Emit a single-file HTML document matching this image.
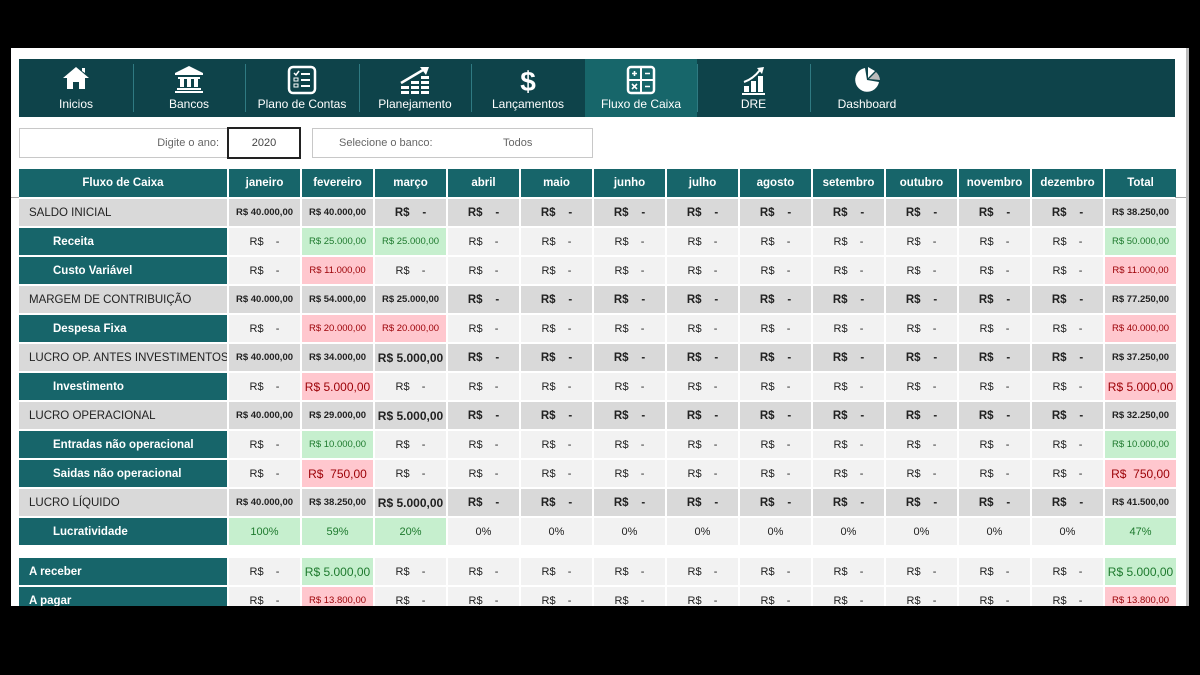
<!DOCTYPE html>
<html><head><meta charset="utf-8"><style>
*{margin:0;padding:0;box-sizing:border-box}
body{width:1200px;height:675px;background:#000;position:relative;overflow:hidden;font-family:"Liberation Sans",sans-serif}
#w{position:absolute;left:11px;top:48px;width:1178px;height:558px;background:#fff;overflow:hidden;border-right:3px solid #bbb}
#nav{position:absolute;left:8px;top:11px;width:1156px;height:58px;background:#0e434a}
.n{position:absolute;top:0;height:58px;color:#fff;font-size:12px;text-align:center}
.n span{position:absolute;left:0;right:0;top:38px}
.n svg{position:absolute;left:50%;top:6px;transform:translateX(-50%)}
.sep{position:absolute;top:5px;width:1px;height:48px;background:#2f7a82}
.box{position:absolute;border:1px solid #c8c8c8;height:30px;font-size:11px;color:#666;background:#fff}
table{position:absolute;left:6px;top:119px;border-collapse:separate;border-spacing:2px;table-layout:fixed}
td{height:27px;width:71px;text-align:center;font-size:11px;color:#222;background:#f2f2f2;white-space:nowrap;padding:0;overflow:hidden}
tr.h td{height:28px;background:#17656a;color:#fff;font-weight:bold;font-size:11.5px}
td.l{width:208px;min-width:208px;max-width:208px;text-align:left;text-indent:10px;font-size:11.5px}
td.t{background:#17656a;color:#fff;font-weight:bold;text-indent:34px}
tr.a td.l{background:#17656a;color:#fff;font-weight:bold}
tr.g td{background:#d9d9d9;font-weight:bold;font-size:9.5px}
tr.g td.l{font-weight:normal;font-size:11.5px}
tr.g td.d,td.d{font-size:11.5px}
td.gr{background:#c6efce!important;color:#1e7a2e;font-weight:normal!important}
td.rd{background:#ffc7ce!important;color:#9c0006;font-weight:normal!important}
td.sm{font-size:9.5px}
td.bg{font-size:12px!important}
tr.sp td{height:9px;background:#fff}
</style></head><body>
<div id="w">
<div id="nav">
<div class="n" style="left:0;width:114px"><svg width="30" height="26" viewBox="0 0 30 26"><path d="M15 2 L2 13 H6 V24 H12 V17 H18 V24 H24 V13 H28 Z M21 3 H24 V8 L21 6Z" fill="#fff"/></svg><span>Inicios</span></div>
<div class="sep" style="left:114px"></div>
<div class="n" style="left:114px;width:112px"><svg width="32" height="28" viewBox="0 0 32 28"><path d="M16 1 L2 8 V10 H30 V8 Z" fill="#fff"/><rect x="5" y="12" width="22" height="2" fill="#fff"/><rect x="7" y="14" width="4" height="8" fill="#fff"/><rect x="14" y="14" width="4" height="8" fill="#fff"/><rect x="21" y="14" width="4" height="8" fill="#fff"/><rect x="4" y="23" width="24" height="2" fill="#fff"/><rect x="2" y="26" width="28" height="2" fill="#fff"/></svg><span>Bancos</span></div>
<div class="sep" style="left:226px"></div>
<div class="n" style="left:226px;width:114px"><svg width="30" height="30" viewBox="0 0 30 30"><rect x="2" y="2" width="26" height="26" rx="4" fill="none" stroke="#fff" stroke-width="2.5"/><path d="M7 8 L9 10 L12 6" stroke="#fff" stroke-width="1.5" fill="none"/><rect x="7" y="13" width="4" height="3" fill="none" stroke="#fff"/><rect x="7" y="19" width="4" height="3" fill="none" stroke="#fff"/><path d="M14 9H23M14 15H23M14 21H23" stroke="#fff" stroke-width="2"/></svg><span>Plano de Contas</span></div>
<div class="sep" style="left:340px"></div>
<div class="n" style="left:340px;width:112px"><svg width="34" height="30" viewBox="0 0 34 30"><path d="M3 18 L25 5" stroke="#fff" stroke-width="2.5"/><path d="M22 2 L31 2 L28 10Z" fill="#fff"/><rect x="3" y="21" width="8" height="3" fill="#fff"/><rect x="3" y="26" width="8" height="3" fill="#fff"/><rect x="13" y="16" width="8" height="3" fill="#fff"/><rect x="13" y="21" width="8" height="3" fill="#fff"/><rect x="13" y="26" width="8" height="3" fill="#fff"/><rect x="23" y="11" width="8" height="3" fill="#fff"/><rect x="23" y="16" width="8" height="3" fill="#fff"/><rect x="23" y="21" width="8" height="3" fill="#fff"/><rect x="23" y="26" width="8" height="3" fill="#fff"/></svg><span>Planejamento</span></div>
<div class="sep" style="left:452px"></div>
<div class="n" style="left:452px;width:114px"><svg width="24" height="30" viewBox="0 0 24 30"><text x="12" y="26" text-anchor="middle" font-family="Liberation Sans" font-weight="bold" font-size="28" fill="#fff">$</text></svg><span>Lançamentos</span></div>
<div class="n" style="left:566px;width:112px;background:#17666a"><svg width="30" height="30" viewBox="0 0 30 30"><rect x="2" y="2" width="26" height="26" rx="3" fill="none" stroke="#fff" stroke-width="2.5"/><path d="M15 2V28M2 15H28" stroke="#fff" stroke-width="2"/><path d="M6 8.5H11M8.5 6V11M19 8.5H24M6 19L11 24M11 19L6 24M19 21.5H24" stroke="#fff" stroke-width="1.6"/></svg><span>Fluxo de Caixa</span></div>
<div class="sep" style="left:678px"></div>
<div class="n" style="left:678px;width:113px"><svg width="26" height="30" viewBox="0 0 26 30"><path d="M3 17 Q12 14 19 5" stroke="#fff" stroke-width="2" fill="none"/><path d="M16 3 L23 2 L21 9Z" fill="#fff"/><rect x="3" y="21" width="5" height="6" fill="#fff"/><rect x="10" y="16" width="5" height="11" fill="#fff"/><rect x="17" y="11" width="5" height="16" fill="#fff"/><rect x="1" y="28" width="23" height="2" fill="#fff"/></svg><span>DRE</span></div>
<div class="sep" style="left:791px"></div>
<div class="n" style="left:791px;width:114px"><svg width="30" height="30" viewBox="0 0 30 30"><path d="M13 3 A12 12 0 1 0 27 17 L15 15 Z" fill="#fff"/><path d="M16 2 L16 13 L23 6Z" fill="#fff"/><path d="M17 14 L24 7 A12 12 0 0 1 28 15Z" fill="#bbb"/></svg><span>Dashboard</span></div>
</div>
<div class="box" style="left:8px;top:80px;width:209px"><span style="position:absolute;right:8px;top:8px">Digite o ano:</span></div>
<div class="box" style="left:216px;top:79px;width:74px;height:32px;border:2px solid #222;color:#444;text-align:center;line-height:28px">2020</div>
<div class="box" style="left:301px;top:80px;width:281px"><span style="position:absolute;left:26px;top:8px">Selecione o banco:</span><span style="position:absolute;left:190px;top:8px">Todos</span></div>
<table>
<colgroup><col style="width:208px"><col span="13" style="width:71px"></colgroup>
<tr class="h"><td class="l" style="text-align:center;text-indent:0">Fluxo de Caixa</td><td>janeiro</td><td>fevereiro</td><td>março</td><td>abril</td><td>maio</td><td>junho</td><td>julho</td><td>agosto</td><td>setembro</td><td>outubro</td><td>novembro</td><td>dezembro</td><td>Total</td></tr>
<tr class="g"><td class="l">SALDO INICIAL</td><td>R$ 40.000,00</td><td>R$ 40.000,00</td><td class="d">R$&nbsp;&nbsp;&nbsp;&nbsp;-</td><td class="d">R$&nbsp;&nbsp;&nbsp;&nbsp;-</td><td class="d">R$&nbsp;&nbsp;&nbsp;&nbsp;-</td><td class="d">R$&nbsp;&nbsp;&nbsp;&nbsp;-</td><td class="d">R$&nbsp;&nbsp;&nbsp;&nbsp;-</td><td class="d">R$&nbsp;&nbsp;&nbsp;&nbsp;-</td><td class="d">R$&nbsp;&nbsp;&nbsp;&nbsp;-</td><td class="d">R$&nbsp;&nbsp;&nbsp;&nbsp;-</td><td class="d">R$&nbsp;&nbsp;&nbsp;&nbsp;-</td><td class="d">R$&nbsp;&nbsp;&nbsp;&nbsp;-</td><td>R$ 38.250,00</td></tr>
<tr><td class="l t">Receita</td><td>R$&nbsp;&nbsp;&nbsp;&nbsp;-</td><td class="gr sm">R$ 25.000,00</td><td class="gr sm">R$ 25.000,00</td><td>R$&nbsp;&nbsp;&nbsp;&nbsp;-</td><td>R$&nbsp;&nbsp;&nbsp;&nbsp;-</td><td>R$&nbsp;&nbsp;&nbsp;&nbsp;-</td><td>R$&nbsp;&nbsp;&nbsp;&nbsp;-</td><td>R$&nbsp;&nbsp;&nbsp;&nbsp;-</td><td>R$&nbsp;&nbsp;&nbsp;&nbsp;-</td><td>R$&nbsp;&nbsp;&nbsp;&nbsp;-</td><td>R$&nbsp;&nbsp;&nbsp;&nbsp;-</td><td>R$&nbsp;&nbsp;&nbsp;&nbsp;-</td><td class="gr sm">R$ 50.000,00</td></tr>
<tr><td class="l t">Custo Variável</td><td>R$&nbsp;&nbsp;&nbsp;&nbsp;-</td><td class="rd sm">R$ 11.000,00</td><td>R$&nbsp;&nbsp;&nbsp;&nbsp;-</td><td>R$&nbsp;&nbsp;&nbsp;&nbsp;-</td><td>R$&nbsp;&nbsp;&nbsp;&nbsp;-</td><td>R$&nbsp;&nbsp;&nbsp;&nbsp;-</td><td>R$&nbsp;&nbsp;&nbsp;&nbsp;-</td><td>R$&nbsp;&nbsp;&nbsp;&nbsp;-</td><td>R$&nbsp;&nbsp;&nbsp;&nbsp;-</td><td>R$&nbsp;&nbsp;&nbsp;&nbsp;-</td><td>R$&nbsp;&nbsp;&nbsp;&nbsp;-</td><td>R$&nbsp;&nbsp;&nbsp;&nbsp;-</td><td class="rd sm">R$ 11.000,00</td></tr>
<tr class="g"><td class="l">MARGEM DE CONTRIBUIÇÃO</td><td>R$ 40.000,00</td><td>R$ 54.000,00</td><td>R$ 25.000,00</td><td class="d">R$&nbsp;&nbsp;&nbsp;&nbsp;-</td><td class="d">R$&nbsp;&nbsp;&nbsp;&nbsp;-</td><td class="d">R$&nbsp;&nbsp;&nbsp;&nbsp;-</td><td class="d">R$&nbsp;&nbsp;&nbsp;&nbsp;-</td><td class="d">R$&nbsp;&nbsp;&nbsp;&nbsp;-</td><td class="d">R$&nbsp;&nbsp;&nbsp;&nbsp;-</td><td class="d">R$&nbsp;&nbsp;&nbsp;&nbsp;-</td><td class="d">R$&nbsp;&nbsp;&nbsp;&nbsp;-</td><td class="d">R$&nbsp;&nbsp;&nbsp;&nbsp;-</td><td>R$ 77.250,00</td></tr>
<tr><td class="l t">Despesa Fixa</td><td>R$&nbsp;&nbsp;&nbsp;&nbsp;-</td><td class="rd sm">R$ 20.000,00</td><td class="rd sm">R$ 20.000,00</td><td>R$&nbsp;&nbsp;&nbsp;&nbsp;-</td><td>R$&nbsp;&nbsp;&nbsp;&nbsp;-</td><td>R$&nbsp;&nbsp;&nbsp;&nbsp;-</td><td>R$&nbsp;&nbsp;&nbsp;&nbsp;-</td><td>R$&nbsp;&nbsp;&nbsp;&nbsp;-</td><td>R$&nbsp;&nbsp;&nbsp;&nbsp;-</td><td>R$&nbsp;&nbsp;&nbsp;&nbsp;-</td><td>R$&nbsp;&nbsp;&nbsp;&nbsp;-</td><td>R$&nbsp;&nbsp;&nbsp;&nbsp;-</td><td class="rd sm">R$ 40.000,00</td></tr>
<tr class="g"><td class="l">LUCRO OP. ANTES INVESTIMENTOS</td><td>R$ 40.000,00</td><td>R$ 34.000,00</td><td class="bg">R$ 5.000,00</td><td class="d">R$&nbsp;&nbsp;&nbsp;&nbsp;-</td><td class="d">R$&nbsp;&nbsp;&nbsp;&nbsp;-</td><td class="d">R$&nbsp;&nbsp;&nbsp;&nbsp;-</td><td class="d">R$&nbsp;&nbsp;&nbsp;&nbsp;-</td><td class="d">R$&nbsp;&nbsp;&nbsp;&nbsp;-</td><td class="d">R$&nbsp;&nbsp;&nbsp;&nbsp;-</td><td class="d">R$&nbsp;&nbsp;&nbsp;&nbsp;-</td><td class="d">R$&nbsp;&nbsp;&nbsp;&nbsp;-</td><td class="d">R$&nbsp;&nbsp;&nbsp;&nbsp;-</td><td>R$ 37.250,00</td></tr>
<tr><td class="l t">Investimento</td><td>R$&nbsp;&nbsp;&nbsp;&nbsp;-</td><td class="rd bg">R$ 5.000,00</td><td>R$&nbsp;&nbsp;&nbsp;&nbsp;-</td><td>R$&nbsp;&nbsp;&nbsp;&nbsp;-</td><td>R$&nbsp;&nbsp;&nbsp;&nbsp;-</td><td>R$&nbsp;&nbsp;&nbsp;&nbsp;-</td><td>R$&nbsp;&nbsp;&nbsp;&nbsp;-</td><td>R$&nbsp;&nbsp;&nbsp;&nbsp;-</td><td>R$&nbsp;&nbsp;&nbsp;&nbsp;-</td><td>R$&nbsp;&nbsp;&nbsp;&nbsp;-</td><td>R$&nbsp;&nbsp;&nbsp;&nbsp;-</td><td>R$&nbsp;&nbsp;&nbsp;&nbsp;-</td><td class="rd bg">R$ 5.000,00</td></tr>
<tr class="g"><td class="l">LUCRO OPERACIONAL</td><td>R$ 40.000,00</td><td>R$ 29.000,00</td><td class="bg">R$ 5.000,00</td><td class="d">R$&nbsp;&nbsp;&nbsp;&nbsp;-</td><td class="d">R$&nbsp;&nbsp;&nbsp;&nbsp;-</td><td class="d">R$&nbsp;&nbsp;&nbsp;&nbsp;-</td><td class="d">R$&nbsp;&nbsp;&nbsp;&nbsp;-</td><td class="d">R$&nbsp;&nbsp;&nbsp;&nbsp;-</td><td class="d">R$&nbsp;&nbsp;&nbsp;&nbsp;-</td><td class="d">R$&nbsp;&nbsp;&nbsp;&nbsp;-</td><td class="d">R$&nbsp;&nbsp;&nbsp;&nbsp;-</td><td class="d">R$&nbsp;&nbsp;&nbsp;&nbsp;-</td><td>R$ 32.250,00</td></tr>
<tr><td class="l t">Entradas não operacional</td><td>R$&nbsp;&nbsp;&nbsp;&nbsp;-</td><td class="gr sm">R$ 10.000,00</td><td>R$&nbsp;&nbsp;&nbsp;&nbsp;-</td><td>R$&nbsp;&nbsp;&nbsp;&nbsp;-</td><td>R$&nbsp;&nbsp;&nbsp;&nbsp;-</td><td>R$&nbsp;&nbsp;&nbsp;&nbsp;-</td><td>R$&nbsp;&nbsp;&nbsp;&nbsp;-</td><td>R$&nbsp;&nbsp;&nbsp;&nbsp;-</td><td>R$&nbsp;&nbsp;&nbsp;&nbsp;-</td><td>R$&nbsp;&nbsp;&nbsp;&nbsp;-</td><td>R$&nbsp;&nbsp;&nbsp;&nbsp;-</td><td>R$&nbsp;&nbsp;&nbsp;&nbsp;-</td><td class="gr sm">R$ 10.000,00</td></tr>
<tr><td class="l t">Saidas não operacional</td><td>R$&nbsp;&nbsp;&nbsp;&nbsp;-</td><td class="rd bg">R$&nbsp;&nbsp;750,00</td><td>R$&nbsp;&nbsp;&nbsp;&nbsp;-</td><td>R$&nbsp;&nbsp;&nbsp;&nbsp;-</td><td>R$&nbsp;&nbsp;&nbsp;&nbsp;-</td><td>R$&nbsp;&nbsp;&nbsp;&nbsp;-</td><td>R$&nbsp;&nbsp;&nbsp;&nbsp;-</td><td>R$&nbsp;&nbsp;&nbsp;&nbsp;-</td><td>R$&nbsp;&nbsp;&nbsp;&nbsp;-</td><td>R$&nbsp;&nbsp;&nbsp;&nbsp;-</td><td>R$&nbsp;&nbsp;&nbsp;&nbsp;-</td><td>R$&nbsp;&nbsp;&nbsp;&nbsp;-</td><td class="rd bg">R$&nbsp;&nbsp;750,00</td></tr>
<tr class="g"><td class="l">LUCRO LÍQUIDO</td><td>R$ 40.000,00</td><td>R$ 38.250,00</td><td class="bg">R$ 5.000,00</td><td class="d">R$&nbsp;&nbsp;&nbsp;&nbsp;-</td><td class="d">R$&nbsp;&nbsp;&nbsp;&nbsp;-</td><td class="d">R$&nbsp;&nbsp;&nbsp;&nbsp;-</td><td class="d">R$&nbsp;&nbsp;&nbsp;&nbsp;-</td><td class="d">R$&nbsp;&nbsp;&nbsp;&nbsp;-</td><td class="d">R$&nbsp;&nbsp;&nbsp;&nbsp;-</td><td class="d">R$&nbsp;&nbsp;&nbsp;&nbsp;-</td><td class="d">R$&nbsp;&nbsp;&nbsp;&nbsp;-</td><td class="d">R$&nbsp;&nbsp;&nbsp;&nbsp;-</td><td>R$ 41.500,00</td></tr>
<tr class="a"><td class="l t">Lucratividade</td><td class="gr">100%</td><td class="gr">59%</td><td class="gr">20%</td><td>0%</td><td>0%</td><td>0%</td><td>0%</td><td>0%</td><td>0%</td><td>0%</td><td>0%</td><td>0%</td><td class="gr">47%</td></tr>
<tr class="sp"><td colspan="14"></td></tr>
<tr class="a"><td class="l">A receber</td><td>R$&nbsp;&nbsp;&nbsp;&nbsp;-</td><td class="gr bg">R$ 5.000,00</td><td>R$&nbsp;&nbsp;&nbsp;&nbsp;-</td><td>R$&nbsp;&nbsp;&nbsp;&nbsp;-</td><td>R$&nbsp;&nbsp;&nbsp;&nbsp;-</td><td>R$&nbsp;&nbsp;&nbsp;&nbsp;-</td><td>R$&nbsp;&nbsp;&nbsp;&nbsp;-</td><td>R$&nbsp;&nbsp;&nbsp;&nbsp;-</td><td>R$&nbsp;&nbsp;&nbsp;&nbsp;-</td><td>R$&nbsp;&nbsp;&nbsp;&nbsp;-</td><td>R$&nbsp;&nbsp;&nbsp;&nbsp;-</td><td>R$&nbsp;&nbsp;&nbsp;&nbsp;-</td><td class="gr bg">R$ 5.000,00</td></tr>
<tr class="a"><td class="l">A pagar</td><td>R$&nbsp;&nbsp;&nbsp;&nbsp;-</td><td class="rd sm">R$ 13.800,00</td><td>R$&nbsp;&nbsp;&nbsp;&nbsp;-</td><td>R$&nbsp;&nbsp;&nbsp;&nbsp;-</td><td>R$&nbsp;&nbsp;&nbsp;&nbsp;-</td><td>R$&nbsp;&nbsp;&nbsp;&nbsp;-</td><td>R$&nbsp;&nbsp;&nbsp;&nbsp;-</td><td>R$&nbsp;&nbsp;&nbsp;&nbsp;-</td><td>R$&nbsp;&nbsp;&nbsp;&nbsp;-</td><td>R$&nbsp;&nbsp;&nbsp;&nbsp;-</td><td>R$&nbsp;&nbsp;&nbsp;&nbsp;-</td><td>R$&nbsp;&nbsp;&nbsp;&nbsp;-</td><td class="rd sm">R$ 13.800,00</td></tr>
</table>
<div style="position:absolute;left:0;top:149px;width:8px;height:1px;background:#aaa"></div>
<div style="position:absolute;left:1164px;top:149px;width:14px;height:1px;background:#aaa"></div>
</div>
</body></html>
